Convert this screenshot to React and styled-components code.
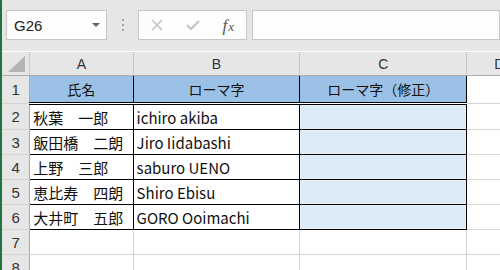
import React from "react";
import styled, { createGlobalStyle } from "styled-components";

const GlobalStyle = createGlobalStyle`
  html, body {
    margin: 0;
    padding: 0;
    background: #ffffff;
  }
  body {
    font-family: "Noto Sans CJK JP", "Noto Sans", sans-serif;
  }
`;

const Window = styled.div`
  width: 500px;
  height: 270px;
  overflow: hidden;
  border-left: 2px solid #217346;
  box-sizing: border-box;
  background: #ffffff;
`;

const Toolbar = styled.div`
  height: 51px;
  background: #e6e6e6;
  display: flex;
  align-items: flex-start;
  padding: 10px 0 0 4px;
  box-sizing: border-box;
`;

const Box = styled.div`
  height: 30px;
  box-sizing: border-box;
  background: #fdfdfd;
  border: 1px solid #c6c6c6;
  display: flex;
  align-items: center;
  width: ${(p) => p.$w}px;
  flex: ${(p) => (p.$grow ? 1 : "none")};
  margin-left: ${(p) => p.$ml || 0}px;
`;

const NameText = styled.span`
  font-family: "Liberation Sans", Arial, sans-serif;
  font-size: 15px;
  color: #222;
  padding-left: 7px;
  flex: 1;
`;

const Caret = styled.span`
  width: 0;
  height: 0;
  border-left: 4px solid transparent;
  border-right: 4px solid transparent;
  border-top: 4px solid #666;
  margin-right: 6px;
`;

const Dots = styled.div`
  width: 31px;
  height: 30px;
  display: flex;
  flex-direction: column;
  align-items: center;
  justify-content: center;
  gap: 3px;
  span {
    width: 2px;
    height: 2px;
    background: #a0a0a0;
  }
`;

const Btn = styled.span`
  flex: 1;
  display: flex;
  justify-content: center;
  align-items: center;
`;

const Fx = styled.span`
  font-family: "Liberation Serif", "Times New Roman", serif;
  font-style: italic;
  font-size: 17px;
  color: #555;
  line-height: 1;
  small {
    font-size: 13px;
    margin-left: 1px;
  }
`;

const Sheet = styled.table`
  border-collapse: collapse;
  table-layout: fixed;
  width: 530px;
  margin-top: 1px;
`;

const Corner = styled.th`
  width: 27px;
  height: 23px;
  background: #e6e6e6;
  border-right: 1px solid #c6c6c6;
  border-bottom: 1px solid #ababab;
  position: relative;
  padding: 0;
  &::after {
    content: "";
    position: absolute;
    right: 4px;
    bottom: 3px;
    width: 0;
    height: 0;
    border-left: 17px solid transparent;
    border-bottom: 16px solid #b4b4b4;
  }
`;

const ColHead = styled.th`
  width: ${(p) => p.$w}px;
  height: 23px;
  background: #e6e6e6;
  border-left: 1px solid #c6c6c6;
  border-bottom: 1px solid #ababab;
  font-family: "Liberation Sans", Arial, sans-serif;
  font-weight: normal;
  font-size: 14px;
  color: #333;
  padding: 0;
  text-align: center;
  white-space: nowrap;
  overflow: hidden;
`;

const RowHead = styled.th`
  background: #e6e6e6;
  border-right: 1px solid #ababab;
  border-bottom: 1px solid #d4d4d4;
  font-family: "Liberation Sans", Arial, sans-serif;
  font-weight: normal;
  font-size: 15px;
  color: #333;
  padding: 0;
  text-align: center;
  height: ${(p) => p.$h || 24}px;
`;

const Cell = styled.td`
  border: 1px solid #d4d4d4;
  padding: 0 0 0 3px;
  font-size: 15px;
  color: #111;
  white-space: nowrap;
  overflow: hidden;
  height: 24px;
`;

const TitleCell = styled(Cell)`
  background: #9bc2e6;
  border: 1px solid #000;
  border-bottom: 3px double #000;
  text-align: center;
  font-size: 14px;
  padding: 0;
  height: 25px;
`;

const DataCell = styled(Cell)`
  border: 1px solid #000;
  background: ${(p) => (p.$fill ? "#ddebf7" : "#ffffff")};
  box-shadow: ${(p) => (p.$fill ? "inset 0 0 0 1px #e8f1fa" : "none")};
`;

const rows = [
  ["秋葉　一郎", "ichiro akiba"],
  ["飯田橋　二朗", "Jiro Iidabashi"],
  ["上野　三郎", "saburo UENO"],
  ["恵比寿　四朗", "Shiro Ebisu"],
  ["大井町　五郎", "GORO Ooimachi"],
];

export default function App() {
  return (
    <>
      <GlobalStyle />
      <Window>
        <Toolbar>
          <Box $w={101}>
            <NameText>G26</NameText>
            <Caret />
          </Box>
          <Dots>
            <span />
            <span />
            <span />
          </Dots>
          <Box $w={109}>
            <Btn>
              <svg width="12" height="12" viewBox="0 0 12 12">
                <path d="M1 1L11 11M11 1L1 11" stroke="#c3c3c3" strokeWidth="1.6" />
              </svg>
            </Btn>
            <Btn>
              <svg width="14" height="12" viewBox="0 0 14 12">
                <path d="M1 6L5 10L13 2" stroke="#c3c3c3" strokeWidth="2" fill="none" />
              </svg>
            </Btn>
            <Btn>
              <Fx>
                f<small>x</small>
              </Fx>
            </Btn>
          </Box>
          <Box $grow $ml={5} />
        </Toolbar>
        <Sheet>
          <thead>
            <tr>
              <Corner />
              <ColHead $w={102}>A</ColHead>
              <ColHead $w={165}>B</ColHead>
              <ColHead $w={165}>C</ColHead>
              <ColHead $w={64}>D</ColHead>
            </tr>
          </thead>
          <tbody>
            <tr>
              <RowHead $h={27}>1</RowHead>
              <TitleCell>氏名</TitleCell>
              <TitleCell>ローマ字</TitleCell>
              <TitleCell>ローマ字（修正）</TitleCell>
              <Cell />
            </tr>
            {rows.map((r, i) => (
              <tr key={i}>
                <RowHead>{i + 2}</RowHead>
                <DataCell>{r[0]}</DataCell>
                <DataCell>{r[1]}</DataCell>
                <DataCell $fill />
                <Cell />
              </tr>
            ))}
            {[7, 8].map((n) => (
              <tr key={n}>
                <RowHead>{n}</RowHead>
                <Cell />
                <Cell />
                <Cell />
                <Cell />
              </tr>
            ))}
          </tbody>
        </Sheet>
      </Window>
    </>
  );
}
